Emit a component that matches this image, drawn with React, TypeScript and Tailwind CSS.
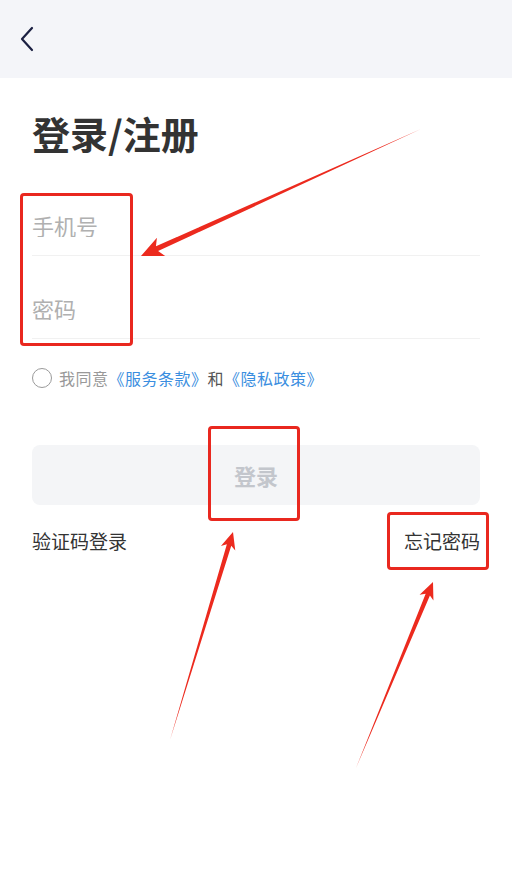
import React from 'react';

type Pt = [number, number];

// tapered annotation arrow: thin tail, thick end, head at tip
function arrowPoints(tail: Pt, tip: Pt, headLen: number, headW: number, shaftW: number) {
  const [tx, ty] = tail;
  const [px, py] = tip;
  const L = Math.hypot(px - tx, py - ty);
  const ux = (px - tx) / L;
  const uy = (py - ty) / L;
  const nx = -uy;
  const ny = ux;
  const bx = px - ux * headLen * 0.8;
  const by = py - uy * headLen * 0.8;
  const wx = px - ux * headLen;
  const wy = py - uy * headLen;
  const pts: Pt[] = [
    [tx, ty],
    [bx + nx * shaftW, by + ny * shaftW],
    [wx + nx * headW, wy + ny * headW],
    [px, py],
    [wx - nx * headW, wy - ny * headW],
    [bx - nx * shaftW, by - ny * shaftW],
  ];
  return pts.map((p) => p.join(',')).join(' ');
}

export default function App() {
  return (
    <div
      className="relative w-[512px] h-[891px] bg-white overflow-hidden"
      style={{ fontFamily: '"Noto Sans CJK SC", "Noto Sans", sans-serif' }}
    >
      {/* Header */}
      <div className="h-[78px] bg-[#f4f5f9] flex items-center pl-[19px]">
        <svg width="16" height="26" viewBox="0 0 16 26" fill="none">
          <path d="M13 2 L3 13 L13 24" stroke="#1b2042" strokeWidth="2.2" strokeLinecap="round" strokeLinejoin="round" />
        </svg>
      </div>

      <div className="px-8">
        <h1 className="mt-[32px] text-[38px] leading-[46px] font-bold text-[#333333]">登录/注册</h1>

        <div className="mt-[17px] border-b border-[#f1f1f1] pt-[40px] pb-[18px]">
          <input
            placeholder="手机号"
            className="block w-full bg-transparent outline-none text-[22px] leading-[24px] text-[#333] placeholder:text-[#b0b0b0]"
          />
        </div>
        <div className="border-b border-[#f1f1f1] pt-[40px] pb-[18px]">
          <input
            type="password"
            placeholder="密码"
            className="block w-full bg-transparent outline-none text-[22px] leading-[24px] text-[#333] placeholder:text-[#b0b0b0]"
          />
        </div>

        <div className="mt-[29px] flex items-center h-[20px]">
          <span className="w-[20px] h-[20px] rounded-full border border-[#9a9a9a] shrink-0" />
          <span className="ml-[7px] text-[16px] tracking-[0.5px] leading-[20px] text-[#999999]">
            我同意<span className="text-[#3a8ee0]">《服务条款》</span>
            <span className="text-[#555555]">和</span>
            <span className="text-[#3a8ee0]">《隐私政策》</span>
          </span>
        </div>

        <button className="mt-[57px] w-full h-[60px] rounded-[8px] bg-[#f4f5f7] text-[22px] font-bold text-[#c3c6cc]">
          登录
        </button>

        <div className="mt-[24px] flex items-center justify-between text-[19px] leading-[24px] text-[#333333]">
          <span>验证码登录</span>
          <span>忘记密码</span>
        </div>
      </div>

      {/* Annotation boxes */}
      <div className="absolute left-[20px] top-[193px] w-[113px] h-[153px] border-[3px] border-[#e9281f] rounded-[4px]" />
      <div className="absolute left-[208px] top-[426px] w-[92px] h-[95px] border-[3px] border-[#e9281f] rounded-[4px]" />
      <div className="absolute left-[387px] top-[512px] w-[102px] h-[58px] border-[3px] border-[#e9281f] rounded-[4px]" />

      {/* Annotation arrows */}
      <svg className="absolute inset-0 pointer-events-none" width="512" height="891">
        <polygon points={arrowPoints([421, 129], [141, 256], 22, 10, 2.6)} fill="#ec2a1e" />
        <polygon points={arrowPoints([170, 740], [233, 532], 17, 7.5, 2.3)} fill="#ec2a1e" />
        <polygon points={arrowPoints([356, 768], [433, 582], 17, 7.5, 2.3)} fill="#ec2a1e" />
      </svg>
    </div>
  );
}
